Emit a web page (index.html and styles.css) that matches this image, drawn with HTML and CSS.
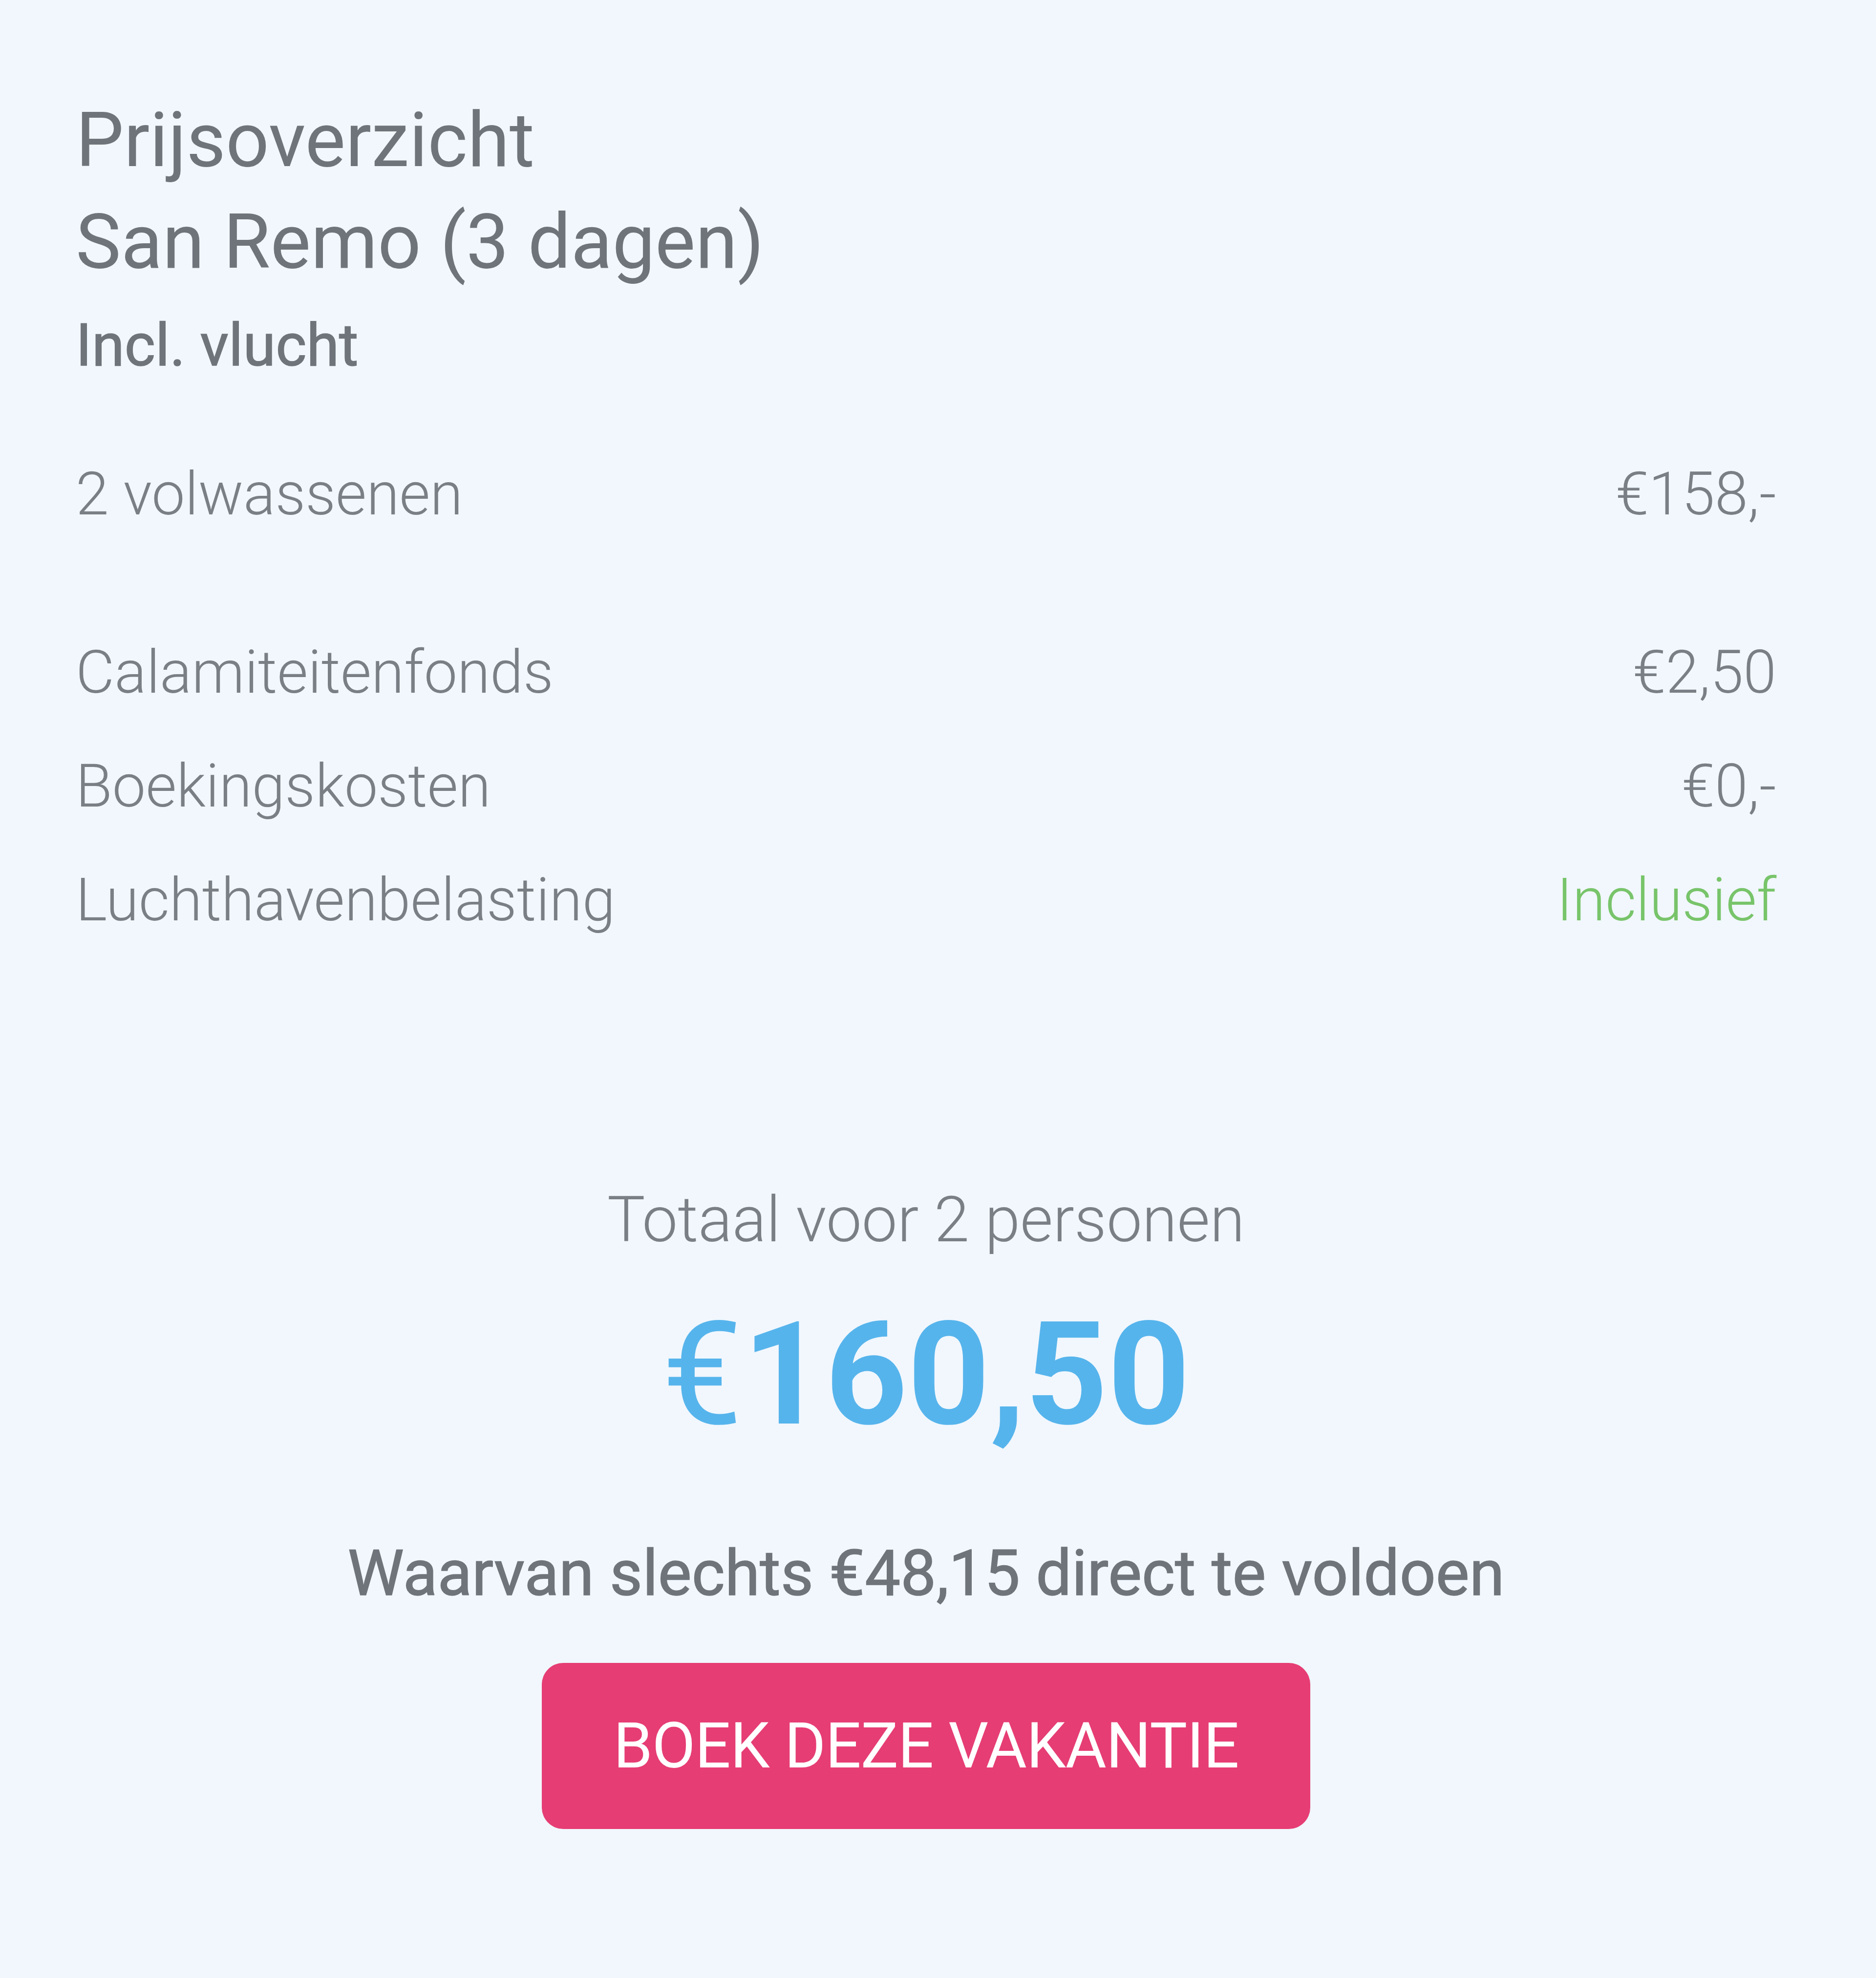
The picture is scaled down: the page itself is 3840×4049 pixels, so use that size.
FILE: index.html
```html
<!DOCTYPE html>
<html lang="nl">
<head>
  <meta charset="UTF-8">
  <meta name="viewport" content="width=device-width, initial-scale=1.0">
  <title>Prijsoverzicht</title>
  <link rel="stylesheet" href="styles.css">
</head>
<body>
  <div class="summary">
    <h1 class="title">Prijsoverzicht<br>San Remo (3 dagen)</h1>
    <p class="subtitle">Incl. vlucht</p>

    <div class="lines first">
      <div class="line"><span>2 volwassenen</span><span>€158,-</span></div>
    </div>

    <div class="lines">
      <div class="line"><span>Calamiteitenfonds</span><span>€2,50</span></div>
      <div class="line"><span>Boekingskosten</span><span>€0,-</span></div>
      <div class="line"><span>Luchthavenbelasting</span><span class="included">Inclusief</span></div>
    </div>

    <div class="total">
      <p class="total-label">Totaal voor 2 personen</p>
      <p class="total-price"><span class="currency">€</span>160,50</p>
      <p class="deposit">Waarvan slechts €48,15 direct te voldoen</p>
      <button class="book" type="button">BOEK DEZE VAKANTIE</button>
    </div>
  </div>
</body>
</html>
```

FILE: styles.css
```css
body {
  margin: 0;
  background-color: #f1f7fd;
  font-family: Roboto, "Liberation Sans", Arial, sans-serif;
  color: #6f747b;
}
.summary {
  padding: 183px 204px 200px 155px;
}
.title {
  margin: 0;
  font-size: 156px;
  line-height: 208px;
  font-weight: 400;
}
.subtitle {
  margin: 28px 0 0;
  font-size: 121px;
  line-height: 160px;
  font-weight: 400;
  -webkit-text-stroke: 1.5px #6f747b;
}
.lines {
  font-size: 122px;
  line-height: 233px;
  font-weight: 300;
  color: #7a7f86;
}
.lines.first {
  margin: 108px 0 132px;
}
.line {
  display: flex;
  justify-content: space-between;
}
.included {
  color: #78c46a;
}
.total {
  margin-top: 458px;
  display: flex;
  flex-direction: column;
  align-items: center;
  text-align: center;
}
.total-label {
  margin: 0;
  font-size: 130px;
  line-height: 160px;
  font-weight: 300;
  color: #7a7f86;
}
.total-price {
  margin: 90px 0 0;
  font-size: 294px;
  line-height: 294px;
  font-weight: 700;
  color: #56b4ec;
}
.currency {
  font-weight: 400;
}
.deposit {
  margin: 180px 0 0;
  font-size: 130px;
  line-height: 160px;
  font-weight: 400;
  -webkit-text-stroke: 1.5px #6f747b;
}
.book {
  margin-top: 103px;
  height: 340px;
  padding: 0 146px;
  border: none;
  border-radius: 44px;
  background-color: #e63d74;
  color: #fff;
  font-family: inherit;
  font-size: 129px;
  line-height: 340px;
  font-weight: 400;
  letter-spacing: -1px;
  cursor: pointer;
}
```
